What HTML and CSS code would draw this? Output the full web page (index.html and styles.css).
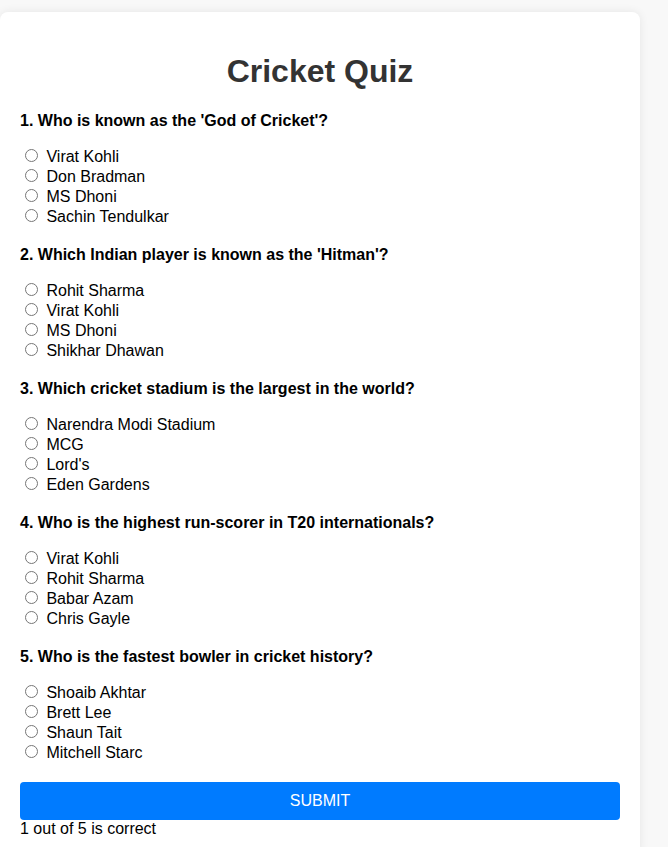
FILE: index.html
```html
<!DOCTYPE html>
<html>
<head>
<meta charset="utf-8">
<link rel="stylesheet" href="styles.css">
</head>
<body>
<div class="quiz">
  <h1 class="title">Cricket Quiz</h1>

  <div class="question">
    <p class="q-text">1. Who is known as the 'God of Cricket'?</p>
    <label class="opt"><input type="radio" name="q1"> Virat Kohli</label>
    <label class="opt"><input type="radio" name="q1"> Don Bradman</label>
    <label class="opt"><input type="radio" name="q1"> MS Dhoni</label>
    <label class="opt"><input type="radio" name="q1"> Sachin Tendulkar</label>
  </div>

  <div class="question">
    <p class="q-text">2. Which Indian player is known as the 'Hitman'?</p>
    <label class="opt"><input type="radio" name="q2"> Rohit Sharma</label>
    <label class="opt"><input type="radio" name="q2"> Virat Kohli</label>
    <label class="opt"><input type="radio" name="q2"> MS Dhoni</label>
    <label class="opt"><input type="radio" name="q2"> Shikhar Dhawan</label>
  </div>

  <div class="question">
    <p class="q-text">3. Which cricket stadium is the largest in the world?</p>
    <label class="opt"><input type="radio" name="q3"> Narendra Modi Stadium</label>
    <label class="opt"><input type="radio" name="q3"> MCG</label>
    <label class="opt"><input type="radio" name="q3"> Lord's</label>
    <label class="opt"><input type="radio" name="q3"> Eden Gardens</label>
  </div>

  <div class="question">
    <p class="q-text">4. Who is the highest run-scorer in T20 internationals?</p>
    <label class="opt"><input type="radio" name="q4"> Virat Kohli</label>
    <label class="opt"><input type="radio" name="q4"> Rohit Sharma</label>
    <label class="opt"><input type="radio" name="q4"> Babar Azam</label>
    <label class="opt"><input type="radio" name="q4"> Chris Gayle</label>
  </div>

  <div class="question">
    <p class="q-text">5. Who is the fastest bowler in cricket history?</p>
    <label class="opt"><input type="radio" name="q5"> Shoaib Akhtar</label>
    <label class="opt"><input type="radio" name="q5"> Brett Lee</label>
    <label class="opt"><input type="radio" name="q5"> Shaun Tait</label>
    <label class="opt"><input type="radio" name="q5"> Mitchell Starc</label>
  </div>

  <button class="submit" type="button">SUBMIT</button>
  <div class="result">1 out of 5 is correct</div>
</div>
</body>
</html>
```

FILE: styles.css
```css
html, body {
  margin: 0;
  padding: 0;
  background: #f8f8f8;
  font-family: "Liberation Sans", Arial, sans-serif;
  font-size: 16px;
  color: #000;
}

.quiz {
  width: 600px;
  margin-top: 12px;
  padding: 20px;
  background: #fff;
  border-radius: 8px;
  box-shadow: 0 0 10px rgba(0, 0, 0, 0.08);
}

.title {
  text-align: center;
  font-size: 32px;
  font-weight: bold;
  color: #333;
  margin: 21px 0 22px;
  line-height: 37px;
}

.question {
  margin-bottom: 20px;
}

.q-text {
  font-weight: bold;
  margin: 0 0 16px;
  line-height: 18px;
}

.opt {
  display: block;
  line-height: 20px;
  height: 20px;
}

.opt input {
  margin: 3px 4px 0 5px;
}

.submit {
  display: block;
  width: 100%;
  height: 38px;
  border: none;
  border-radius: 4px;
  background: #007bff;
  color: #fff;
  font-family: "Liberation Sans", Arial, sans-serif;
  font-size: 16px;
  cursor: pointer;
}

.result {
  line-height: 18px;
}
```
